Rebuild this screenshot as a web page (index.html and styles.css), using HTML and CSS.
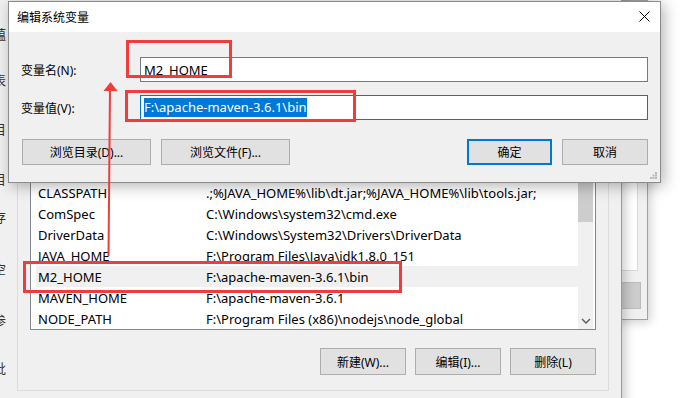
FILE: index.html
```html
<!DOCTYPE html>
<html>
<head>
  <link rel="stylesheet" href="styles.css">
</head>
<body>
  <div class="desk">
    <!-- window cut off at the left edge -->
    <div class="win win-edge">
      <span style="top: 24px">蕴</span>
      <span style="top: 70px">表</span>
      <span style="top: 119px">目</span>
      <span style="top: 169px">目</span>
      <span style="top: 207px">存</span>
      <span style="top: 259px">空</span>
      <span style="top: 310px">参</span>
      <span style="top: 358px">批</span>
    </div>

    <!-- window further back on the right -->
    <div class="win win-far">
      <div class="far-panel"></div>
      <div class="far-button"></div>
    </div>

    <!-- environment variables window -->
    <div class="win win-env">
      <div class="group">
        <div class="list">
          <div class="rows">
            <div class="row"><span class="name">CLASSPATH</span><span class="value">.;%JAVA_HOME%\lib\dt.jar;%JAVA_HOME%\lib\tools.jar;</span></div>
            <div class="row"><span class="name">ComSpec</span><span class="value">C:\Windows\system32\cmd.exe</span></div>
            <div class="row"><span class="name">DriverData</span><span class="value">C:\Windows\System32\Drivers\DriverData</span></div>
            <div class="row"><span class="name">JAVA_HOME</span><span class="value">F:\Program Files\Java\jdk1.8.0_151</span></div>
            <div class="row row-selected"><span class="name">M2_HOME</span><span class="value">F:\apache-maven-3.6.1\bin</span></div>
            <div class="row"><span class="name">MAVEN_HOME</span><span class="value">F:\apache-maven-3.6.1</span></div>
            <div class="row"><span class="name">NODE_PATH</span><span class="value">F:\Program Files (x86)\nodejs\node_global</span></div>
          </div>
          <div class="scrollbar">
            <div class="thumb"></div>
            <svg class="scroll-down" width="10" height="6" viewBox="0 0 10 6">
              <path d="M1 1 L5 5 L9 1" fill="none" stroke="#606060" stroke-width="1.5"/>
            </svg>
          </div>
        </div>
        <div class="actions">
          <button class="btn">新建(W)...</button>
          <button class="btn">编辑(I)...</button>
          <button class="btn">删除(L)</button>
        </div>
      </div>
    </div>

    <!-- edit dialog -->
    <div class="win dialog">
      <div class="titlebar">
        <span class="title">编辑系统变量</span>
        <svg class="close" width="11" height="11" viewBox="0 0 11 11">
          <path d="M0.5 0.5 L10.5 10.5 M10.5 0.5 L0.5 10.5" stroke="#000" stroke-width="1"/>
        </svg>
      </div>
      <div class="dialog-body">
        <div class="field">
          <span class="label">变量名(N):</span>
          <div class="input">M2_HOME</div>
        </div>
        <div class="field">
          <span class="label">变量值(V):</span>
          <div class="input input-focus"><span class="selected">F:\apache-maven-3.6.1\bin</span></div>
        </div>
        <div class="dialog-buttons">
          <button class="btn btn-wide">浏览目录(D)...</button>
          <button class="btn btn-wide">浏览文件(F)...</button>
          <span class="spacer"></span>
          <button class="btn btn-default">确定</button>
          <button class="btn">取消</button>
        </div>
      </div>
      <svg class="grip" width="7" height="7" viewBox="0 0 7 7">
        <rect x="5" y="0" width="2" height="2" fill="#b8b8b8"/>
        <rect x="2.5" y="2.5" width="2" height="2" fill="#b8b8b8"/>
        <rect x="5" y="2.5" width="2" height="2" fill="#b8b8b8"/>
        <rect x="0" y="5" width="2" height="2" fill="#b8b8b8"/>
        <rect x="2.5" y="5" width="2" height="2" fill="#b8b8b8"/>
        <rect x="5" y="5" width="2" height="2" fill="#b8b8b8"/>
      </svg>
    </div>

    <!-- red annotations drawn over the screenshot -->
    <svg class="marks" width="697" height="398" viewBox="0 0 697 398">
      <g fill="none" stroke="#f23b3b" stroke-width="3">
        <rect x="127.5" y="41.5" width="103" height="35"/>
        <rect x="126.5" y="91.5" width="228" height="29"/>
        <rect x="24.5" y="262.5" width="376" height="29"/>
      </g>
      <line x1="110" y1="88" x2="108.5" y2="256" stroke="#f23b3b" stroke-width="2"/>
      <polygon points="110.5,82 103.5,91 117.5,91" fill="#f23b3b"/>
    </svg>
  </div>
</body>
</html>
```

FILE: styles.css
```css
body {
  margin: 0;
  background: #ffffff;
  font-family: 'Noto Sans', 'Noto Sans CJK SC', sans-serif;
  font-size: 12px;
  color: #000;
  overflow: hidden;
}

.desk {
  position: relative;
  width: 697px;
  height: 398px;
  overflow: hidden;
}

.win {
  position: absolute;
  box-sizing: border-box;
  background: #f0f0f0;
}

/* Window cut off at the left */
.win-edge {
  left: 0;
  top: 0;
  width: 8px;
  height: 398px;
  overflow: hidden;
  z-index: 2;
}

.win-edge span {
  position: absolute;
  left: -7px;
  font-size: 13px;
  color: #333;
}

/* Window behind on the right */
.win-far {
  left: 520px;
  top: 0;
  width: 128px;
  height: 320px;
  border: 1px solid #a0a0a0;
  box-shadow: 2px 2px 10px rgba(0, 0, 0, 0.2);
  padding: 99px 6px 0 0;
  display: flex;
  flex-direction: column;
  align-items: flex-end;
  gap: 11px;
}

.far-panel {
  width: 100px;
  height: 171px;
  margin-right: 3px;
  background: #fff;
  border: 1px solid #d9d9d9;
  box-sizing: border-box;
}

.far-button {
  width: 60px;
  height: 27px;
  background: #cccccc;
  border: 1px solid #bcbcbc;
  box-sizing: border-box;
}

/* Environment variables window */
.win-env {
  left: 0;
  top: 0;
  width: 622px;
  height: 420px;
  border-right: 1px solid #9a9a9a;
  box-shadow: 3px 0 10px rgba(0, 0, 0, 0.22);
  padding: 150px 12px 0 17px;
  z-index: 1;
}

.group {
  border: 1px solid #dcdcdc;
  padding: 30px 12px 15px 12px;
}

.list {
  display: flex;
  background: #fff;
  border: 1px solid #828790;
  padding-right: 2px;
}

.rows {
  flex: 1;
  padding-left: 5px;
}

.row {
  display: flex;
  height: 21px;
  align-items: center;
  padding-left: 2px;
  font-size: 13px;
  color: #000;
  white-space: nowrap;
}

.row-selected {
  background: #f0f0f0;
}

.name {
  width: 168px;
}

.scrollbar {
  width: 15px;
  background: #f0f0f0;
  display: flex;
  flex-direction: column;
  align-items: center;
  justify-content: space-between;
  padding-bottom: 5px;
}

.thumb {
  width: 15px;
  height: 40px;
  background: #cdcdcd;
}

.actions {
  display: flex;
  justify-content: flex-end;
  gap: 9px;
  margin-top: 18px;
}

.btn {
  height: 27px;
  width: 86px;
  background: #e1e1e1;
  border: 1px solid #adadad;
  font-family: 'Noto Sans', 'Noto Sans CJK SC', sans-serif;
  font-size: 12px;
  color: #000;
  padding: 0;
}

/* Edit dialog */
.dialog {
  left: 8px;
  top: 1px;
  width: 653px;
  height: 182px;
  border: 1px solid #8c8c8c;
  box-shadow: 3px 3px 14px rgba(0, 0, 0, 0.3);
  z-index: 3;
}

.titlebar {
  height: 30px;
  background: #fff;
  display: flex;
  align-items: center;
  justify-content: space-between;
  padding: 0 10px 0 8px;
}

.title {
  font-size: 12px;
}

.close {
  margin-top: -2px;
}

.dialog-body {
  padding: 25px 12px 0 12px;
  display: flex;
  flex-direction: column;
  gap: 13px;
}

.field {
  display: flex;
  align-items: center;
}

.label {
  width: 119px;
}

.input {
  flex: 1;
  box-sizing: border-box;
  height: 25px;
  background: #fff;
  border: 1px solid #7a7a7a;
  padding: 0 3px;
  font-size: 13px;
  display: flex;
  align-items: center;
}

.input-focus {
  border-color: #0078d7;
}

.selected {
  background: #0078d7;
  color: #fff;
  line-height: 19px;
}

.dialog-buttons {
  display: flex;
  gap: 10px;
  margin-top: 6px;
  padding-left: 1px;
}

.dialog-buttons .btn {
  height: 26px;
}

.btn-wide {
  width: 129px;
}

.spacer {
  flex: 1;
}

.btn-default {
  width: 85px;
  border: 2px solid #0078d7;
}

.grip {
  position: absolute;
  right: 3px;
  bottom: 3px;
}

.marks {
  position: absolute;
  left: 0;
  top: 0;
  z-index: 4;
}
```
